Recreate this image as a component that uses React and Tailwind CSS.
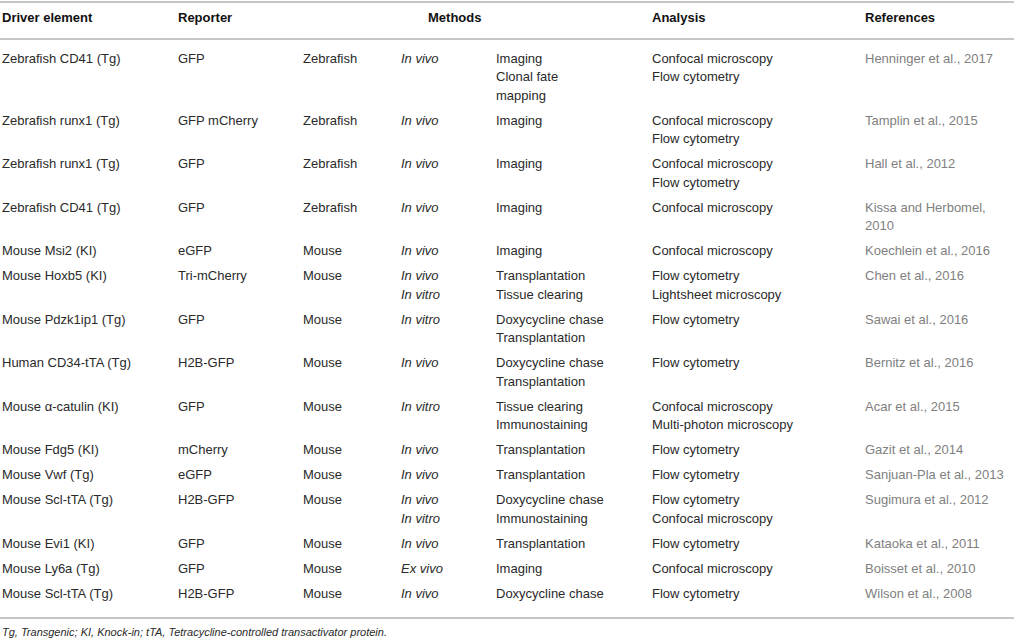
import React from "react";

const rows = [
  [["Zebrafish CD41 (Tg)"], ["GFP"], ["Zebrafish"], ["In vivo"], ["Imaging", "Clonal fate", "mapping"], ["Confocal microscopy", "Flow cytometry"], ["Henninger et al., 2017"]],
  [["Zebrafish runx1 (Tg)"], ["GFP mCherry"], ["Zebrafish"], ["In vivo"], ["Imaging"], ["Confocal microscopy", "Flow cytometry"], ["Tamplin et al., 2015"]],
  [["Zebrafish runx1 (Tg)"], ["GFP"], ["Zebrafish"], ["In vivo"], ["Imaging"], ["Confocal microscopy", "Flow cytometry"], ["Hall et al., 2012"]],
  [["Zebrafish CD41 (Tg)"], ["GFP"], ["Zebrafish"], ["In vivo"], ["Imaging"], ["Confocal microscopy"], ["Kissa and Herbomel,", "2010"]],
  [["Mouse Msi2 (KI)"], ["eGFP"], ["Mouse"], ["In vivo"], ["Imaging"], ["Confocal microscopy"], ["Koechlein et al., 2016"]],
  [["Mouse Hoxb5 (KI)"], ["Tri-mCherry"], ["Mouse"], ["In vivo", "In vitro"], ["Transplantation", "Tissue clearing"], ["Flow cytometry", "Lightsheet microscopy"], ["Chen et al., 2016"]],
  [["Mouse Pdzk1ip1 (Tg)"], ["GFP"], ["Mouse"], ["In vitro"], ["Doxycycline chase", "Transplantation"], ["Flow cytometry"], ["Sawai et al., 2016"]],
  [["Human CD34-tTA (Tg)"], ["H2B-GFP"], ["Mouse"], ["In vivo"], ["Doxycycline chase", "Transplantation"], ["Flow cytometry"], ["Bernitz et al., 2016"]],
  [["Mouse \u03b1-catulin (KI)"], ["GFP"], ["Mouse"], ["In vitro"], ["Tissue clearing", "Immunostaining"], ["Confocal microscopy", "Multi-photon microscopy"], ["Acar et al., 2015"]],
  [["Mouse Fdg5 (KI)"], ["mCherry"], ["Mouse"], ["In vivo"], ["Transplantation"], ["Flow cytometry"], ["Gazit et al., 2014"]],
  [["Mouse Vwf (Tg)"], ["eGFP"], ["Mouse"], ["In vivo"], ["Transplantation"], ["Flow cytometry"], ["Sanjuan-Pla et al., 2013"]],
  [["Mouse Scl-tTA (Tg)"], ["H2B-GFP"], ["Mouse"], ["In vivo", "In vitro"], ["Doxycycline chase", "Immunostaining"], ["Flow cytometry", "Confocal microscopy"], ["Sugimura et al., 2012"]],
  [["Mouse Evi1 (KI)"], ["GFP"], ["Mouse"], ["In vivo"], ["Transplantation"], ["Flow cytometry"], ["Kataoka et al., 2011"]],
  [["Mouse Ly6a (Tg)"], ["GFP"], ["Mouse"], ["Ex vivo"], ["Imaging"], ["Confocal microscopy"], ["Boisset et al., 2010"]],
  [["Mouse Scl-tTA (Tg)"], ["H2B-GFP"], ["Mouse"], ["In vivo"], ["Doxycycline chase"], ["Flow cytometry"], ["Wilson et al., 2008"]],
];

const grid = "grid grid-cols-[176px_125px_98px_95px_156px_213px_1fr] pl-[2px]";

export default function App() {
  return (
    <div
      className="w-[1014px] h-[638px] bg-white overflow-hidden"
      style={{ fontFamily: '"Liberation Sans", Arial, sans-serif' }}
    >
      <div className="h-[1px]" />
      <div className="border-t-2 border-[#c6c6c6]" />
      <div className={`${grid} pt-[6px] pb-[10px] text-[13px] leading-[18.5px] font-bold text-[#111]`}>
        <div>Driver element</div>
        <div>Reporter</div>
        <div className="col-span-3 pl-[125px]">Methods</div>
        <div>Analysis</div>
        <div>References</div>
      </div>
      <div className="border-t-2 border-[#c6c6c6]" />
      <div className="pt-[7px] pb-[10px]">
        {rows.map((r, i) => (
          <div key={i} className={`${grid} py-[3.25px] text-[13px] leading-[18.5px] text-[#2a2a2a]`}>
            {r.map((cell, j) => (
              <div
                key={j}
                className={
                  j === 3 ? "italic" : j === 6 ? "text-[#808080]" : ""
                }
              >
                {cell.map((line, k) => (
                  <div key={k} className="whitespace-nowrap">{line}</div>
                ))}
              </div>
            ))}
          </div>
        ))}
      </div>
      <div className="border-t-2 border-[#c6c6c6]" />
      <div className="pt-[5px] pl-[2px] text-[11px] leading-[16px] italic text-[#2a2a2a]">
        Tg, Transgenic; KI, Knock-in; tTA, Tetracycline-controlled transactivator protein.
      </div>
    </div>
  );
}
